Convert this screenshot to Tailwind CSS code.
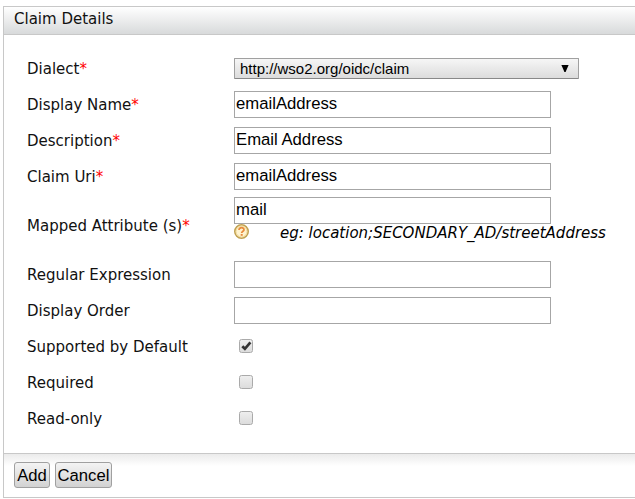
<!DOCTYPE html>
<html lang="en">
<head>
<meta charset="utf-8">
<title>Claim Details</title>
<script src="https://cdn.jsdelivr.net/npm/@tailwindcss/browser@4"></script>
</head>
<body class="bg-white overflow-hidden font-['DejaVu_Sans',sans-serif] text-[15px] leading-[18px] text-[#111]">
<form class="ml-[3px] mt-[6px] h-[492px] w-[640px] border border-[#c8c8c8] flex flex-col">
  <h1 class="h-[28px] shrink-0 border-b border-[#c8c8c8] bg-linear-to-b from-white to-[#d8dadb] pl-[10px] pt-[3px]">Claim Details</h1>
  <div class="h-[418px] shrink-0 pt-[16px] pl-[23px]">
    <div class="flex h-9 items-center"><label class="w-[207px]">Dialect<span class="text-[#f00]">*</span></label>
      <div class="-mt-px flex h-[21px] w-[345px] items-center justify-between rounded-[1px] border border-[#a0a0a0] border-b-[#888] bg-linear-to-b from-[#f6f6f6] to-[#dcdcdc] pl-[5px] pr-[9px] pt-px font-['Liberation_Sans',sans-serif] text-black"><span>http://wso2.org/oidc/claim</span><svg class="-mt-[2px]" width="8" height="7" viewBox="0 0 8 7"><path d="M.4 0h7.2L4.6 7H3.4z"/></svg></div></div>
    <div class="flex h-9 items-center"><label class="w-[207px]">Display Name<span class="text-[#f00]">*</span></label><input class="-mt-px h-[27px] w-[317px] border border-[#a6a6a6] bg-white px-px pb-[2px] font-['Liberation_Sans',sans-serif] text-[16.7px] text-black" value="emailAddress"></div>
    <div class="flex h-9 items-center"><label class="w-[207px]">Description<span class="text-[#f00]">*</span></label><input class="-mt-px h-[27px] w-[317px] border border-[#a6a6a6] bg-white px-px pb-[2px] font-['Liberation_Sans',sans-serif] text-[16.7px] text-black" value="Email Address"></div>
    <div class="flex h-9 items-center"><label class="w-[207px]">Claim Uri<span class="text-[#f00]">*</span></label><input class="-mt-px h-[27px] w-[317px] border border-[#a6a6a6] bg-white px-px pb-[2px] font-['Liberation_Sans',sans-serif] text-[16.7px] text-black" value="emailAddress"></div>
    <div class="flex h-[62px] items-center"><label class="w-[207px]">Mapped Attribute (s)<span class="text-[#f00]">*</span></label>
      <div class="h-[58px]">
        <input class="block h-[27px] w-[317px] border border-[#a6a6a6] bg-white px-px pb-[2px] font-['Liberation_Sans',sans-serif] text-[16.7px] text-black" value="mail">
        <div class="flex"><svg width="16" height="16" viewBox="0 0 16 16"><circle cx="7.5" cy="7.5" r="6.7" fill="#fff3cf" stroke="#c0a050" stroke-width="1.6"/><circle cx="7.5" cy="7.5" r="5.5" fill="none" stroke="#ead08a" stroke-width=".8"/><path d="M5 6.1c0-3.3 5.2-3.1 5-.2-.1 1.4-2.3 1.5-2.3 3.2" fill="none" stroke="#e88a3c" stroke-width="1.7"/><path d="M6.7 10h2v1.8h-2z" fill="#e88a3c"/></svg><span class="ml-[30px] text-black italic">eg: location;SECONDARY_AD/streetAddress</span></div>
      </div></div>
    <div class="flex h-9 items-center"><label class="w-[207px]">Regular Expression</label><input class="-mt-px h-[27px] w-[317px] border border-[#a6a6a6] bg-white"></div>
    <div class="flex h-9 items-center"><label class="w-[207px]">Display Order</label><input class="-mt-px h-[27px] w-[317px] border border-[#a6a6a6] bg-white"></div>
    <div class="flex h-9 items-center"><label class="w-[212px]">Supported by Default</label><span class="-mt-[2px] block size-[14px] rounded-[2.5px] border border-[#aaa] bg-linear-to-b from-[#eee] to-[#dcdcdc]"><svg width="12" height="12" viewBox="0 0 12 12"><path d="M2.3 6.2l2.6 2.6L10.4 2.4" fill="none" stroke="#333" stroke-width="2.7"/></svg></span></div>
    <div class="flex h-9 items-center"><label class="w-[212px]">Required</label><span class="-mt-[2px] block size-[14px] rounded-[2.5px] border border-[#aaa] bg-linear-to-b from-[#eee] to-[#dcdcdc]"></span></div>
    <div class="flex h-9 items-center"><label class="w-[212px]">Read-only</label><span class="-mt-[2px] block size-[14px] rounded-[2.5px] border border-[#aaa] bg-linear-to-b from-[#eee] to-[#dcdcdc]"></span></div>
  </div>
  <div class="flex grow gap-[5px] border-t border-[#c8c8c8] bg-linear-to-b from-[#ebebeb] to-white to-[12px] pl-[10px] pt-[8px] font-['Liberation_Sans',sans-serif] text-[16.67px] text-black">
    <button type="button" class="h-[26px] w-[36px] rounded-[3px] border border-[#a0a0a0] bg-linear-to-b from-[#f4f4f4] to-[#d2d2d2] pt-px">Add</button>
    <button type="button" class="h-[26px] w-[57px] rounded-[3px] border border-[#a0a0a0] bg-linear-to-b from-[#f4f4f4] to-[#d2d2d2] pt-px">Cancel</button>
  </div>
</form>
</body>
</html>
